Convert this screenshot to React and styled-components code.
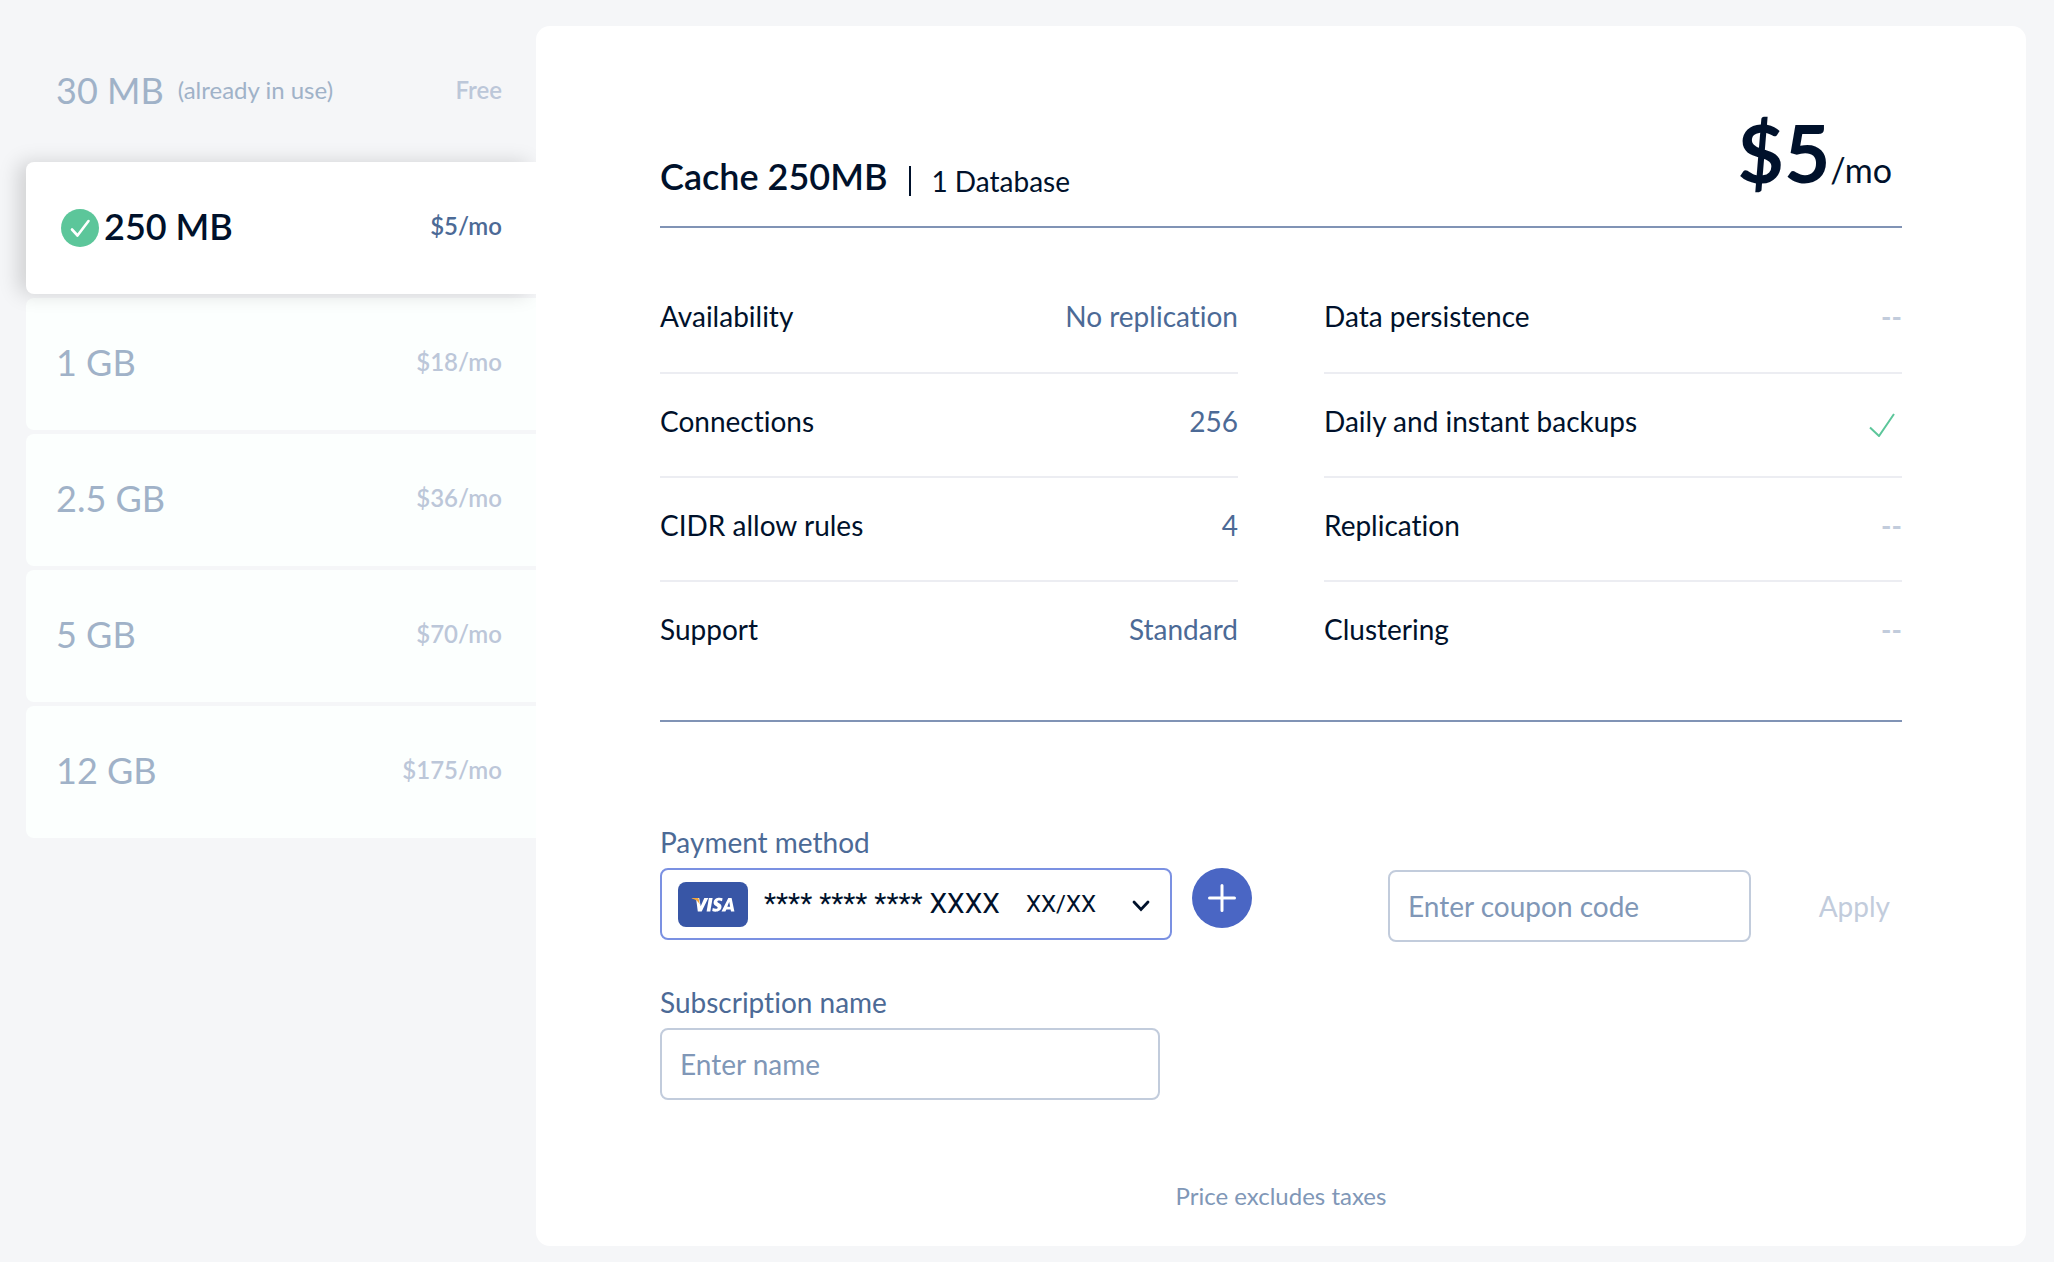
import React, { useState } from 'react';
import styled, { createGlobalStyle } from 'styled-components';

const color = {
  page: '#f5f6f8',
  ink: '#00112b',
  blue: '#4c6a96',
  muted: '#8097b7',
  faint: '#c2ccdc',
  size: '#a0b2c8',
  price: '#bcc7d9',
  rule: '#8093b5',
  hairline: '#ecedf2',
  green: '#5cc69a',
  accent: '#4a66c4',
  focus: '#7b91e2',
};

const GlobalStyle = createGlobalStyle`
  *, *::before, *::after { box-sizing: border-box; }
  body {
    margin: 0;
    background: ${color.page};
    color: ${color.ink};
    font-family: Lato, "Open Sans", sans-serif;
    font-size: 28px;
    line-height: 40px;
    font-variant-ligatures: none;
  }
  button, input, select { font: inherit; color: inherit; margin: 0; }
`;

const Page = styled.div`
  display: flex;
  align-items: stretch;
  padding: 26px 28px 17px 26px;
`;

const PlanList = styled.nav`
  flex: 0 0 510px;
  display: flex;
  flex-direction: column;
  gap: 4px;
`;

const Plan = styled.button`
  display: flex;
  align-items: center;
  min-height: 132px;
  padding: 0 34px 4px 30px;
  border: 0;
  border-radius: 8px 0 0 8px;
  text-align: left;
  cursor: pointer;
  color: ${(p) => (p.$selected ? color.ink : color.size)};
  background: ${(p) => (p.$used ? 'transparent' : p.$selected ? '#fff' : '#fcfffe')};
  box-shadow: ${(p) => (p.$selected ? '-8px 0 20px rgba(0, 0, 0, 0.15)' : 'none')};
  z-index: ${(p) => (p.$selected ? 1 : 0)};
`;

const PlanSize = styled.span`
  font-size: 36px;
  font-weight: ${(p) => (p.$selected ? 600 : 400)};
`;

const PlanNote = styled.span`
  margin-left: 14px;
  font-size: 24px;
`;

const PlanPrice = styled.span`
  margin-left: auto;
  font-size: 24px;
  font-weight: 600;
  color: ${(p) => (p.$selected ? color.blue : color.price)};
`;

const SelectedBadge = styled.svg`
  flex: none;
  width: 38px;
  height: 38px;
  margin: 4px 5px 0 5px;
`;

const Card = styled.main`
  flex: 1;
  min-width: 0;
  padding: 76px 124px 30px;
  border-radius: 14px;
  background: #fff;
  z-index: 2;
`;

const CardHeader = styled.header`
  display: flex;
  align-items: flex-end;
  justify-content: space-between;
  padding: 0 10px 24px 0;
  border-bottom: 2px solid ${color.rule};
`;

const Heading = styled.div`
  display: flex;
  align-items: flex-end;
  padding-bottom: 6px;
`;

const Title = styled.h1`
  margin: 0;
  font-size: 36px;
  font-weight: 600;
`;

const Databases = styled.span`
  margin-left: 22px;
  padding-left: 20px;
  border-left: 2px solid ${color.ink};
  line-height: 30px;
`;

const Price = styled.div`
  font-size: 80px;
  font-weight: 700;
  line-height: 100px;
`;

const Period = styled.span`
  font-size: 34px;
  font-weight: 400;
  line-height: 40px;
`;

const Features = styled.section`
  display: grid;
  grid-template-columns: 1fr 1fr;
  column-gap: 86px;
  padding: 40px 0 36px;
  border-bottom: 2px solid ${color.rule};
`;

const FeatureColumn = styled.dl`
  margin: 0;
`;

const Feature = styled.div`
  display: flex;
  align-items: center;
  justify-content: space-between;
  min-height: 104px;
  padding-bottom: 8px;
  & + & { border-top: 2px solid ${color.hairline}; }
`;

const FeatureName = styled.dt``;

const FeatureValue = styled.dd`
  display: flex;
  margin: 0;
  font-weight: ${(p) => (p.$empty ? 700 : 400)};
  color: ${(p) => (p.$empty ? color.faint : color.blue)};
`;

const Tick = styled.svg`
  width: 26px;
  height: 24px;
  margin: 8px 7px 0 0;
`;

const Form = styled.form`
  display: flex;
  flex-direction: column;
  gap: 40px;
  padding-top: 100px;
`;

const FormRow = styled.div`
  display: flex;
  align-items: flex-start;
  justify-content: space-between;
`;

const Field = styled.div`
  display: flex;
  flex-direction: column;
  align-items: flex-start;
  gap: 6px;
`;

const Label = styled.label`
  color: ${color.blue};
`;

const Controls = styled.div`
  display: flex;
  align-items: flex-start;
  gap: 20px;
`;

const CardPicker = styled.div`
  display: grid;
  align-items: center;
  width: 512px;
  font-family: Roboto, Lato, sans-serif;
  & > * { grid-area: 1 / 1; }
`;

const CardSelect = styled.select`
  appearance: none;
  width: 100%;
  height: 72px;
  padding: 0 150px 0 102px;
  border: 2px solid ${color.focus};
  border-radius: 8px;
  background: #fff;
  outline: none;
`;

const VisaLogo = styled.svg`
  width: 70px;
  height: 45px;
  margin-left: 18px;
  pointer-events: none;
`;

const CardMeta = styled.div`
  display: flex;
  align-items: center;
  justify-self: end;
  gap: 36px;
  margin-right: 22px;
  font-size: 24px;
  pointer-events: none;
`;

const Chevron = styled.svg`
  width: 18px;
  height: 12px;
  margin-top: 4px;
`;

const AddButton = styled.button`
  display: grid;
  place-items: center;
  width: 60px;
  height: 60px;
  padding: 0;
  border: 0;
  border-radius: 50%;
  background: ${color.accent};
  cursor: pointer;
`;

const TextInput = styled.input`
  width: ${(p) => p.$width};
  height: 72px;
  padding: 0 18px;
  border: 2px solid ${color.faint};
  border-radius: 8px;
  background: #fff;
  outline: none;
  &::placeholder { color: ${color.muted}; opacity: 1; }
`;

const Coupon = styled.div`
  display: flex;
  align-items: center;
  gap: 51px;
  padding-top: 48px;
`;

const ApplyButton = styled.button`
  min-width: 100px;
  padding: 0 12px;
  border: 0;
  background: none;
  text-align: right;
  color: ${color.faint};
`;

const Footnote = styled.p`
  margin: 76px 0 0;
  font-size: 24px;
  text-align: center;
  color: ${color.muted};
`;

const plans = [
  { size: '30 MB', price: 'Free', used: true },
  { size: '250 MB', price: '$5/mo' },
  { size: '1 GB', price: '$18/mo' },
  { size: '2.5 GB', price: '$36/mo' },
  { size: '5 GB', price: '$70/mo' },
  { size: '12 GB', price: '$175/mo' },
];

const features = [
  [
    ['Availability', 'No replication'],
    ['Connections', '256'],
    ['CIDR allow rules', '4'],
    ['Support', 'Standard'],
  ],
  [
    ['Data persistence', null],
    ['Daily and instant backups', true],
    ['Replication', null],
    ['Clustering', null],
  ],
];

function Badge() {
  return (
    <SelectedBadge viewBox="0 0 38 38" aria-hidden="true">
      <circle cx="19" cy="19" r="19" fill={color.green} />
      <path d="M11 20.5 16.5 26.5 27.5 12" fill="none" stroke="#fff" strokeWidth="2.6" strokeLinecap="round" strokeLinejoin="round" />
    </SelectedBadge>
  );
}

function Visa() {
  return (
    <VisaLogo viewBox="0 0 70 45" role="img" aria-label="Visa">
      <rect width="70" height="45" rx="8" fill="#3856a6" />
      <g fill="#fff">
        <path d="M18 16h3.2l1.5 8.2L26.3 16h4l-6.6 13.5h-3.9z" />
        <path d="M30.9 16h3.7L32.3 29.5h-3.7z" />
        <path d="M44.6 16.3 44 19.2c-1.7-.8-4.5-.9-4.7.4-.2 1.500 4.600 1.700 4.200 5.400-.5 4.600-5.700 5.400-9.300 4.100l.6-3.100c1.800 1 4.700 1.300 4.900-.2.200-1.500-4.500-1.800-4.100-5.500.4-4.400 5.400-5.300 9-4z" />
        <path fillRule="evenodd" d="M50.3 16h3.3l2.8 13.500h-3.400l-.4-2h-4.200l-1 2h-3.900zM51.2 19.800l-1.900 5h2.800z" />
      </g>
      <path d="M13.8 16h5.4c1.100 0 1.400.5 1.600 1.300l1 5.300c-1.200-2.700-3.700-5.200-8-6.100z" fill="#f3a63b" />
    </VisaLogo>
  );
}

function Value({ value }) {
  if (value === true) {
    return (
      <Tick viewBox="0 0 26 24" role="img" aria-label="Included">
        <path d="M1 14.5 10 23 25 1" fill="none" stroke={color.green} strokeWidth="2" />
      </Tick>
    );
  }
  return value ?? '--';
}

export default function App() {
  const [selected, setSelected] = useState('250 MB');
  return (
    <>
      <GlobalStyle />
      <Page>
        <PlanList aria-label="Plans">
          {plans.map((plan) => {
            const on = plan.size === selected;
            return (
              <Plan
                key={plan.size}
                type="button"
                disabled={plan.used}
                aria-pressed={on}
                $selected={on}
                $used={plan.used}
                onClick={() => setSelected(plan.size)}
              >
                {on && <Badge />}
                <PlanSize $selected={on}>{plan.size}</PlanSize>
                {plan.used && <PlanNote>(already in use)</PlanNote>}
                <PlanPrice $selected={on}>{plan.price}</PlanPrice>
              </Plan>
            );
          })}
        </PlanList>

        <Card>
          <CardHeader>
            <Heading>
              <Title>Cache 250MB</Title>
              <Databases>1 Database</Databases>
            </Heading>
            <Price>$5<Period>/mo</Period></Price>
          </CardHeader>

          <Features>
            {features.map((column) => (
              <FeatureColumn key={column[0][0]}>
                {column.map(([name, value]) => (
                  <Feature key={name}>
                    <FeatureName>{name}</FeatureName>
                    <FeatureValue $empty={value === null}><Value value={value} /></FeatureValue>
                  </Feature>
                ))}
              </FeatureColumn>
            ))}
          </Features>

          <Form onSubmit={(e) => e.preventDefault()}>
            <FormRow>
              <Field>
                <Label htmlFor="payment">Payment method</Label>
                <Controls>
                  <CardPicker>
                    <CardSelect id="payment">
                      <option>**** **** **** XXXX</option>
                    </CardSelect>
                    <Visa />
                    <CardMeta>
                      <span>XX/XX</span>
                      <Chevron viewBox="0 0 18 12" aria-hidden="true">
                        <path d="M2 2 9 9.5 16 2" fill="none" stroke={color.ink} strokeWidth="2.8" strokeLinecap="round" />
                      </Chevron>
                    </CardMeta>
                  </CardPicker>
                  <AddButton type="button" aria-label="Add payment method">
                    <svg width="28" height="28" viewBox="0 0 28 28" aria-hidden="true">
                      <path d="M14 1.5v25M1.5 14h25" stroke="#fff" strokeWidth="3" strokeLinecap="round" />
                    </svg>
                  </AddButton>
                </Controls>
              </Field>
              <Coupon>
                <TextInput $width="363px" aria-label="Coupon code" placeholder="Enter coupon code" />
                <ApplyButton type="submit" disabled>Apply</ApplyButton>
              </Coupon>
            </FormRow>
            <Field>
              <Label htmlFor="subscription">Subscription name</Label>
              <TextInput id="subscription" $width="500px" placeholder="Enter name" />
            </Field>
          </Form>

          <Footnote>Price excludes taxes</Footnote>
        </Card>
      </Page>
    </>
  );
}
